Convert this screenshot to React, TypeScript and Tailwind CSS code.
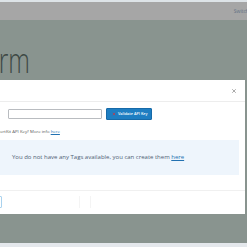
import { X } from "lucide-react";

export default function App() {
  return (
    <div className="w-[247px] h-[247px] overflow-hidden flex flex-col bg-[#89948f] font-['Open_Sans',sans-serif]">
      <div className="h-[2px] bg-[#dde3e7]" />
      <TopBar />
      <div className="flex-1 flex flex-col">
        <h1 className="-ml-[28px] mt-[23px] mb-[3px] h-[34px] text-[34px] leading-[34px] font-light text-[#3d4844] origin-left scale-x-[0.72]">
          Form
        </h1>
        <ConnectModal />
      </div>
      <div className="h-[4px] bg-[#e4e8ec]" />
    </div>
  );
}

function TopBar() {
  return (
    <div className="h-[18px] bg-[#a6a6a6] flex items-center justify-end overflow-hidden">
      <span className="-mr-[8px] text-[5px] leading-none text-[#5f7185]">Switch to</span>
    </div>
  );
}

function ConnectModal() {
  return (
    <div className="-ml-[20px] w-[265px] h-[134px] bg-white flex flex-col">
      <div className="h-[22px] shrink-0 border-b border-[#ededed] flex items-center justify-end pr-[8px]">
        <X className="w-[6px] h-[6px] text-[#777]" strokeWidth={2.5} />
      </div>
      <div className="pl-[28px] pr-[6px] pt-[6px] flex flex-col">
        <div className="flex items-center gap-[4px]">
          <input className="w-[94px] h-[10px] border border-[#b9bcc0] rounded-[1px] bg-white" />
          <button className="h-[12px] w-[46px] bg-[#1e7ec2] border border-[#176aa8] rounded-[1px] flex items-center gap-[2px] pl-[5px] text-[3.8px] font-semibold leading-none text-white">
            <X className="w-[4px] h-[4px] text-[#d8323a]" strokeWidth={4} />
            Validate API Key
          </button>
        </div>
        <p className="-ml-[44px] mt-[8px] text-[4.3px] leading-[6px] text-[#555]">
          Don't have a ConvertKit API Key? More info{" "}
          <a className="text-[#2271b1] underline">here</a>
        </p>
      </div>
      <div className="ml-[16px] mr-[6px] mt-[6px] h-[35px] shrink-0 bg-[#eef5fc] flex items-center pl-[16px] text-[6px] text-[#4f5e74]">
        <span>
          You do not have any Tags available, you can create them{" "}
          <a className="text-[#2271b1] underline">here</a>
        </span>
      </div>
      <div className="mt-[15px] border-t border-[#f0f0f0] pt-[5px] pl-[18px] flex items-start">
        <div className="w-[4px] h-[12px] border border-[#a9d2ee] rounded-[1px]" />
        <div className="ml-[77px] w-px h-[12px] bg-[#f4f4f4]" />
        <div className="ml-[10px] w-px h-[12px] bg-[#f4f4f4]" />
      </div>
    </div>
  );
}
